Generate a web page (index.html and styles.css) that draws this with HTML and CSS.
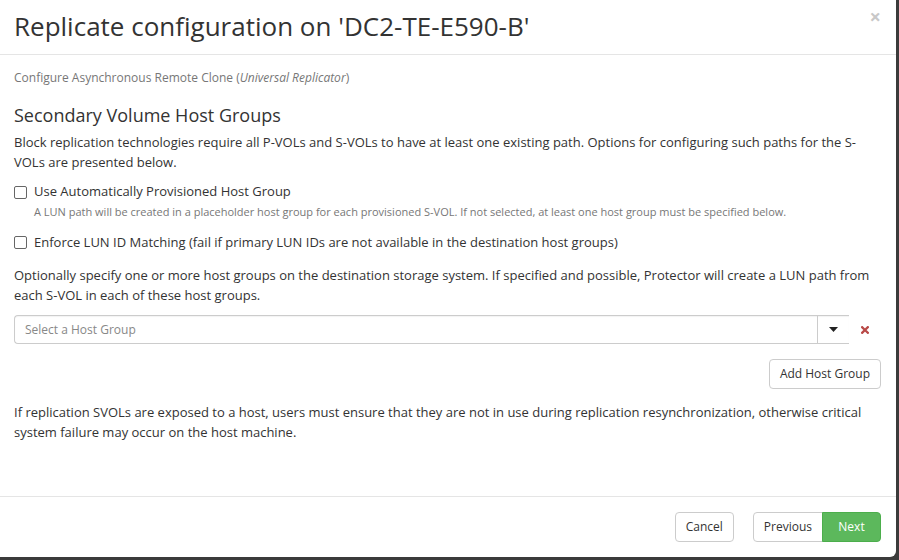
FILE: index.html
```html
<!DOCTYPE html>
<html>
<head>
<meta charset="utf-8">
<link rel="stylesheet" href="styles.css">
</head>
<body>
<div class="modal">
  <div class="modal-header">
    <h3 class="title">Replicate configuration on 'DC2-TE-E590-B'</h3>
    <span class="close">×</span>
  </div>
  <div class="modal-body">
    <p class="subtitle">Configure Asynchronous Remote Clone (<em>Universal Replicator</em>)</p>
    <h4 class="section">Secondary Volume Host Groups</h4>
    <p class="text">Block replication technologies require all P-VOLs and S-VOLs to have at least one existing path. Options for configuring such paths for the S-VOLs are presented below.</p>
    <div class="check first">
      <span class="box"></span>
      <div class="check-text">
        <div class="label">Use Automatically Provisioned Host Group</div>
        <div class="help">A LUN path will be created in a placeholder host group for each provisioned S-VOL. If not selected, at least one host group must be specified below.</div>
      </div>
    </div>
    <div class="check second">
      <span class="box"></span>
      <div class="check-text">
        <div class="label">Enforce LUN ID Matching (fail if primary LUN IDs are not available in the destination host groups)</div>
      </div>
    </div>
    <p class="text optional">Optionally specify one or more host groups on the destination storage system. If specified and possible, Protector will create a LUN path from each S-VOL in each of these host groups.</p>
    <div class="select-row">
      <div class="select">
        <span class="placeholder">Select a Host Group</span>
        <span class="arrow"><svg width="9" height="5" viewBox="0 0 9 5"><path d="M0 0h9L4.5 5z" fill="#222"/></svg></span>
      </div>
      <span class="remove"><svg width="8" height="8" viewBox="0 0 8 8"><path d="M1.2 1.2l5.6 5.6M6.8 1.2l-5.6 5.6" stroke="#b94a48" stroke-width="2.3" stroke-linecap="square"/></svg></span>
    </div>
    <div class="add-row"><button class="btn">Add Host Group</button></div>
    <p class="text warn">If replication SVOLs are exposed to a host, users must ensure that they are not in use during replication resynchronization, otherwise critical system failure may occur on the host machine.</p>
  </div>
  <div class="modal-footer">
    <button class="btn">Cancel</button>
    <div class="btn-group">
      <button class="btn">Previous</button>
      <button class="btn btn-success">Next</button>
    </div>
  </div>
</div>
</body>
</html>
```
FILE: styles.css
```css
html, body {
  margin: 0;
  padding: 0;
}
body {
  background: #3b3b3b;
  width: 899px;
  height: 560px;
  overflow: hidden;
  font-family: "Open Sans", "Liberation Sans", sans-serif;
  color: #333;
}
.modal {
  width: 896px;
  height: 557px;
  background: #fff;
  border-radius: 0 0 6px 0;
  display: flex;
  flex-direction: column;
}
.modal-header {
  height: 54px;
  border-bottom: 1px solid #e5e5e5;
  display: flex;
  align-items: center;
  justify-content: space-between;
  padding: 0 15px 0 14px;
  box-sizing: content-box;
}
.title {
  margin: 0;
  font-size: 26px;
  font-weight: 400;
  line-height: 30px;
  color: #333;
  position: relative;
  top: -1px;
}
.close {
  font-size: 20px;
  font-weight: 700;
  color: #c8c8c8;
  line-height: 20px;
  align-self: flex-start;
  margin-top: 7px;
}
.modal-body {
  flex: 1;
  padding: 14px 15px 0 14px;
}
.subtitle {
  margin: 0;
  font-size: 12px;
  line-height: 17px;
  color: #777;
}
.subtitle em { font-style: italic; }
.section {
  margin: 19px 0 0;
  font-size: 18px;
  font-weight: 400;
  line-height: 20px;
}
.text {
  margin: 8px 0 0;
  font-size: 13px;
  line-height: 19.5px;
}
.check {
  display: flex;
  gap: 7px;
}
.check.first { margin-top: 10px; }
.check.second { margin-top: 14px; }
.box {
  width: 11px;
  height: 11px;
  border: 1px solid #666;
  border-radius: 2px;
  margin-top: 3.5px;
  flex-shrink: 0;
  background: #fff;
}
.label {
  font-size: 13px;
  line-height: 19.5px;
}
.help {
  margin-top: 2px;
  font-size: 11px;
  line-height: 15px;
  color: #777;
}
.text.optional { margin-top: 14px; }
.select-row {
  display: flex;
  align-items: center;
  margin-top: 10px;
}
.select {
  width: 834px;
  height: 27px;
  border: 1px solid #ccc;
  border-radius: 4px 0 0 4px;
  border-right: none;
  display: flex;
  align-items: center;
  justify-content: space-between;
  box-shadow: inset 0 1px 1px rgba(0,0,0,.05);
}
.placeholder {
  font-size: 12px;
  color: #888;
  padding-left: 10px;
}
.arrow {
  width: 31px;
  height: 27px;
  border-left: 1px solid #ccc;
  display: flex;
  align-items: center;
  justify-content: center;
}
.remove {
  margin-left: 12px;
  display: flex;
}
.add-row {
  display: flex;
  justify-content: flex-end;
  margin-top: 15px;
}
.btn {
  font-family: "Open Sans", "Liberation Sans", sans-serif;
  font-size: 12px;
  color: #333;
  background: #fff;
  border: 1px solid #ccc;
  border-radius: 4px;
  height: 30px;
  padding: 0 10px;
  line-height: 28px;
  margin: 0;
}
.text.warn { margin-top: 14px; }
.modal-footer {
  height: 30px;
  border-top: 1px solid #e5e5e5;
  padding: 15px 15px 15px 14px;
  display: flex;
  justify-content: flex-end;
  gap: 19px;
}
.btn-group {
  display: flex;
}
.btn-group .btn:first-child {
  border-radius: 4px 0 0 4px;
}
.btn-group .btn:last-child {
  border-radius: 0 4px 4px 0;
  margin-left: -1px;
}
.btn-success {
  background: #5cb85c;
  border-color: #4cae4c;
  color: #fff;
  width: 59px;
}
```
